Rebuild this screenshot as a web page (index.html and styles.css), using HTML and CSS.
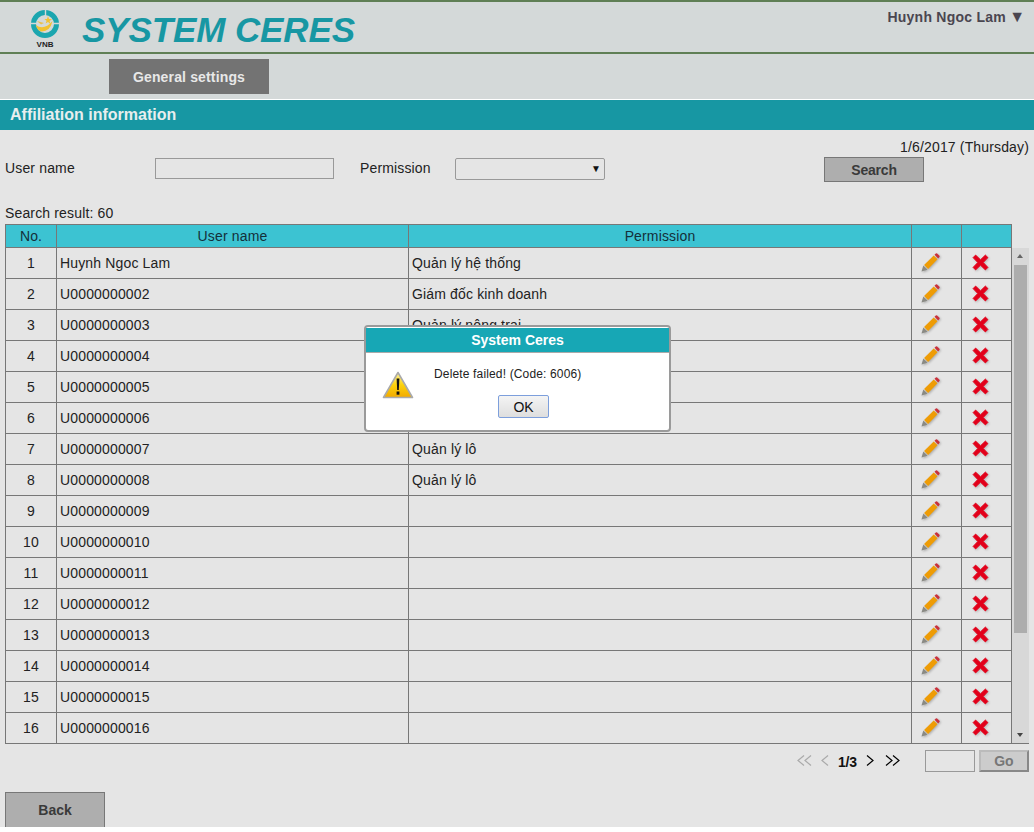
FILE: index.html
```html
<!DOCTYPE html>
<html lang="vi">
<head>
  <meta charset="UTF-8">
  <title>System Ceres</title>
  <link rel="stylesheet" href="styles.css">
</head>
<body>

  <svg class="defs" width="0" height="0">
    <symbol id="pencil" viewBox="0 0 20 20">
      <path d="M0.5 19.5 L2.5 13.2 L6.8 17.5 Z" fill="#8a8a84"/>
      <path d="M3.2 12.5 L13.4 2.6 L17.4 6.6 L7.5 16.8 Z" fill="#ee9c06"/>
      <path d="M14.2 1.8 L15.6 0.4 Q16.3 -0.1 17 0.5 L19.4 2.9 Q19.9 3.6 19.4 4.3 L18.1 5.8 Z" fill="#c9303a"/>
    </symbol>
    <symbol id="cross" viewBox="0 0 16 16">
      <path d="M1 3.4 L3.4 1 L8 5.4 L12.6 1 L15 3.4 L10.6 8 L15 12.6 L12.6 15 L8 10.6 L3.4 15 L1 12.6 L5.4 8 Z" fill="#e2001a" stroke="#e2001a" stroke-width="0.8" stroke-linejoin="round"/>
    </symbol>
  </svg>

  <div class="page">

    <header class="top-bar">
      <svg class="logo" width="32" height="32" viewBox="0 0 32 32">
        <circle cx="16" cy="16" r="11.5" fill="none" stroke="#1ba6af" stroke-width="5"/>
        <path d="M0 15.5 H8 M24 15.5 H32 M16.5 0 V8" stroke="#d4d9d9" stroke-width="1.4"/>
        <path d="M6.8 17 Q15 23 23.5 13 Q21 24 12 23.5 Q8 22 6.8 17 Z" fill="#f2c230"/>
        <path d="M8 13 L15 15 L12 16.5 Z" fill="#e8c050"/>
        <path d="M19 8 L20 11 L23 11.3 L20.6 13 L21.4 16 L19 14 L16.6 15.4 L17.6 12.8 L15.4 11 L18 11 Z" fill="#f2c230"/>
      </svg>
      <span class="logo-text">VNB</span>
      <h1 class="app-title">SYSTEM CERES</h1>
      <div class="user-menu">Huynh Ngoc Lam <span class="user-caret">▼</span></div>
    </header>

    <nav class="nav-bar">
      <a class="nav-item">General settings</a>
    </nav>

    <h2 class="section-title">Affiliation information</h2>

    <main class="content">
      <div class="date-line">1/6/2017 (Thursday)</div>

      <form class="search-form">
        <label class="label-user">User name</label>
        <input class="field-user" type="text">
        <label class="label-perm">Permission</label>
        <div class="field-perm">▼</div>
        <button class="btn btn-search" type="button">Search</button>
      </form>

      <div class="result-count">Search result: 60</div>

      <div class="grid-wrap">
        <table class="grid">
          <colgroup>
            <col class="c-no"><col class="c-user"><col class="c-perm"><col class="c-act"><col class="c-act">
          </colgroup>
          <thead>
            <tr><th>No.</th><th>User name</th><th>Permission</th><th></th><th></th></tr>
          </thead>
          <tbody>
            <tr><td class="num">1</td><td>Huynh Ngoc Lam</td><td>Quản lý hệ thống</td><td class="act"><svg class="i-pen"><use href="#pencil"/></svg></td><td class="act"><svg class="i-del"><use href="#cross"/></svg></td></tr>
            <tr><td class="num">2</td><td>U0000000002</td><td>Giám đốc kinh doanh</td><td class="act"><svg class="i-pen"><use href="#pencil"/></svg></td><td class="act"><svg class="i-del"><use href="#cross"/></svg></td></tr>
            <tr><td class="num">3</td><td>U0000000003</td><td>Quản lý nông trại</td><td class="act"><svg class="i-pen"><use href="#pencil"/></svg></td><td class="act"><svg class="i-del"><use href="#cross"/></svg></td></tr>
            <tr><td class="num">4</td><td>U0000000004</td><td></td><td class="act"><svg class="i-pen"><use href="#pencil"/></svg></td><td class="act"><svg class="i-del"><use href="#cross"/></svg></td></tr>
            <tr><td class="num">5</td><td>U0000000005</td><td></td><td class="act"><svg class="i-pen"><use href="#pencil"/></svg></td><td class="act"><svg class="i-del"><use href="#cross"/></svg></td></tr>
            <tr><td class="num">6</td><td>U0000000006</td><td></td><td class="act"><svg class="i-pen"><use href="#pencil"/></svg></td><td class="act"><svg class="i-del"><use href="#cross"/></svg></td></tr>
            <tr><td class="num">7</td><td>U0000000007</td><td>Quản lý lô</td><td class="act"><svg class="i-pen"><use href="#pencil"/></svg></td><td class="act"><svg class="i-del"><use href="#cross"/></svg></td></tr>
            <tr><td class="num">8</td><td>U0000000008</td><td>Quản lý lô</td><td class="act"><svg class="i-pen"><use href="#pencil"/></svg></td><td class="act"><svg class="i-del"><use href="#cross"/></svg></td></tr>
            <tr><td class="num">9</td><td>U0000000009</td><td></td><td class="act"><svg class="i-pen"><use href="#pencil"/></svg></td><td class="act"><svg class="i-del"><use href="#cross"/></svg></td></tr>
            <tr><td class="num">10</td><td>U0000000010</td><td></td><td class="act"><svg class="i-pen"><use href="#pencil"/></svg></td><td class="act"><svg class="i-del"><use href="#cross"/></svg></td></tr>
            <tr><td class="num">11</td><td>U0000000011</td><td></td><td class="act"><svg class="i-pen"><use href="#pencil"/></svg></td><td class="act"><svg class="i-del"><use href="#cross"/></svg></td></tr>
            <tr><td class="num">12</td><td>U0000000012</td><td></td><td class="act"><svg class="i-pen"><use href="#pencil"/></svg></td><td class="act"><svg class="i-del"><use href="#cross"/></svg></td></tr>
            <tr><td class="num">13</td><td>U0000000013</td><td></td><td class="act"><svg class="i-pen"><use href="#pencil"/></svg></td><td class="act"><svg class="i-del"><use href="#cross"/></svg></td></tr>
            <tr><td class="num">14</td><td>U0000000014</td><td></td><td class="act"><svg class="i-pen"><use href="#pencil"/></svg></td><td class="act"><svg class="i-del"><use href="#cross"/></svg></td></tr>
            <tr><td class="num">15</td><td>U0000000015</td><td></td><td class="act"><svg class="i-pen"><use href="#pencil"/></svg></td><td class="act"><svg class="i-del"><use href="#cross"/></svg></td></tr>
            <tr><td class="num">16</td><td>U0000000016</td><td></td><td class="act"><svg class="i-pen"><use href="#pencil"/></svg></td><td class="act"><svg class="i-del"><use href="#cross"/></svg></td></tr>
          </tbody>
        </table>
        <div class="scrollbar">
          <span class="arrow-up"></span>
          <span class="thumb"></span>
          <span class="arrow-down"></span>
        </div>
      </div>

      <div class="pager">
        <svg class="pg pg-double off" viewBox="0 0 15 11"><path d="M7 0.5 L1 5.5 L7 10.5 M14 0.5 L8 5.5 L14 10.5"/></svg>
        <svg class="pg pg-single off" viewBox="0 0 8 11"><path d="M7 0.5 L1 5.5 L7 10.5"/></svg>
        <span class="pg-num">1/3</span>
        <svg class="pg pg-single" viewBox="0 0 8 11"><path d="M1 0.5 L7 5.5 L1 10.5"/></svg>
        <svg class="pg pg-double" viewBox="0 0 15 11"><path d="M1 0.5 L7 5.5 L1 10.5 M8 0.5 L14 5.5 L8 10.5"/></svg>
        <input class="pg-input" type="text">
        <button class="pg-go" type="button">Go</button>
      </div>

      <button class="btn btn-back" type="button">Back</button>
    </main>

    <div class="dialog">
      <div class="dialog-title">System Ceres</div>
      <div class="dialog-body">
        <svg class="warn" width="32" height="28" viewBox="0 0 32 28">
          <defs>
            <linearGradient id="warnFill" x1="0" y1="0" x2="0" y2="1">
              <stop offset="0" stop-color="#fff3a0"/>
              <stop offset="0.5" stop-color="#fcd20c"/>
              <stop offset="1" stop-color="#f2a900"/>
            </linearGradient>
          </defs>
          <path d="M16 1.5 L30.5 26.5 H1.5 Z" fill="url(#warnFill)" stroke="#aaa" stroke-width="1.6" stroke-linejoin="round"/>
          <path d="M14.6 7.5 H17.4 L16.8 19 H15.2 Z" fill="#111"/>
          <rect x="14.6" y="20.5" width="2.8" height="3.2" fill="#111"/>
        </svg>
        <div class="dialog-main">
          <p class="dialog-msg">Delete failed! (Code: 6006)</p>
          <button class="dialog-ok" type="button">OK</button>
        </div>
      </div>
    </div>

  </div>

</body>
</html>
```

FILE: styles.css
```css
body {
  margin: 0;
  background: #fff;
  font-family: "Liberation Sans", Arial, sans-serif;
  font-size: 14px;
  letter-spacing: 0.15px;
  color: #222;
}

.defs {
  position: absolute;
}

.page {
  position: relative;
  height: 827px;
  overflow: hidden;
  background: #e5e5e5;
}

/* header */
.top-bar {
  position: relative;
  display: flex;
  align-items: flex-start;
  height: 50px;
  background: #d4d9d9;
  border-top: 2px solid #5f7f55;
  border-bottom: 2px solid #5f7f55;
}

.logo {
  margin: 6px 0 0 29px;
}

.logo-text {
  position: absolute;
  left: 29px;
  top: 38px;
  width: 32px;
  text-align: center;
  font-size: 8px;
  font-weight: bold;
  letter-spacing: 0;
  color: #222;
}

.app-title {
  margin: 7px 0 0 21px;
  font-size: 35px;
  line-height: 42px;
  font-weight: bold;
  font-style: italic;
  letter-spacing: -0.1px;
  color: #1797a3;
}

.user-menu {
  margin: 7px 10px 0 auto;
  height: 16px;
  line-height: 16px;
  font-weight: bold;
  letter-spacing: 0.25px;
  color: #4a4650;
}

.user-caret {
  margin-left: -1px;
  font-size: 16px;
  line-height: 14px;
  letter-spacing: -1px;
}

.nav-bar {
  display: flex;
  box-sizing: border-box;
  height: 46px;
  padding: 5px 0 0 109px;
  background: #d4d9d9;
  border-bottom: 1px solid #fff;
}

.nav-item {
  width: 160px;
  height: 35px;
  line-height: 36px;
  text-align: center;
  font-weight: bold;
  color: #e8e8e8;
  background: #737373;
}

.section-title {
  margin: 0;
  height: 30px;
  padding-left: 10px;
  line-height: 29px;
  font-size: 16px;
  letter-spacing: 0;
  color: #e8eeee;
  background: #1797a3;
}

/* form */
.content {
  padding: 0 5px;
}

.date-line {
  padding-top: 9px;
  height: 16px;
  line-height: 16px;
  text-align: right;
}

.search-form {
  display: flex;
  align-items: flex-start;
  height: 47px;
  margin-top: 3px;
}

.label-user {
  width: 150px;
  padding-top: 2px;
}

.field-user {
  width: 179px;
  height: 21px;
  padding: 0;
  box-sizing: border-box;
  background: transparent;
  border: 1px solid #999;
}

.label-perm {
  margin-left: 26px;
  width: 95px;
  padding-top: 2px;
}

.field-perm {
  width: 150px;
  height: 22px;
  box-sizing: border-box;
  border: 1px solid #999;
  border-radius: 2px;
  text-align: right;
  padding-right: 3px;
  font-size: 10px;
  line-height: 20px;
  color: #111;
}

.btn {
  width: 100px;
  background: #aeaeae;
  border: 1px solid #777;
  font-family: inherit;
  font-size: 14px;
  font-weight: bold;
  letter-spacing: 0;
  color: #3a3a3a;
  padding: 0;
}

.btn-search {
  height: 25px;
  margin: -1px 0 0 219px;
  letter-spacing: -0.2px;
}

.result-count {
  height: 16px;
  line-height: 16px;
}

/* table */
.grid-wrap {
  display: flex;
  align-items: flex-start;
  margin-top: 3px;
}

.grid {
  width: 1007px;
  table-layout: fixed;
  border-collapse: separate;
  border-spacing: 0;
  border-top: 1px solid #777;
  border-left: 1px solid #777;
}

.c-no { width: 51px; }
.c-user { width: 352px; }
.c-perm { width: 503px; }
.c-act { width: 50px; }

.grid th, .grid td {
  padding: 0;
  border-right: 1px solid #777;
  border-bottom: 1px solid #777;
  font-weight: normal;
}

.grid th {
  height: 22px;
  text-align: center;
  background: #3cc3d2;
  color: #14303a;
}

.grid td {
  height: 30px;
  padding-left: 3px;
}

.grid td.num {
  padding-left: 0;
  text-align: center;
}

.grid td.act {
  padding-left: 0;
}

.i-pen {
  display: block;
  width: 19px;
  height: 19px;
  margin: 0 0 1px 9px;
  filter: drop-shadow(1px 1px 1px rgba(0, 0, 0, 0.25));
}

.i-del {
  display: block;
  width: 17px;
  height: 17px;
  margin: 0 0 1px 10px;
  filter: drop-shadow(1px 1px 1px rgba(0, 0, 0, 0.2));
}

.scrollbar {
  position: relative;
  flex: none;
  width: 17px;
  height: 495px;
  margin-top: 24px;
  background: #d8d8d8;
  border-bottom: 1px solid #777;
}

.thumb {
  position: absolute;
  left: 2px;
  top: 17px;
  width: 13px;
  height: 368px;
  background: #adadad;
}

.arrow-up, .arrow-down {
  position: absolute;
  left: 5px;
  width: 0;
  height: 0;
  border-left: 3.5px solid transparent;
  border-right: 3.5px solid transparent;
}

.arrow-up {
  top: 6px;
  border-bottom: 4px solid #666;
}

.arrow-down {
  bottom: 6px;
  border-top: 4px solid #444;
}

/* pager */
.pager {
  display: flex;
  align-items: center;
  height: 23px;
  margin-top: 5px;
}

.pg {
  fill: none;
  stroke: #000;
  stroke-width: 1.2;
  height: 11px;
  margin-top: -1px;
}

.pg.off {
  stroke: #aaa;
}

.pg-double {
  width: 15px;
}

.pg-single {
  width: 8px;
}

.pager .pg-double:first-child {
  margin-left: 792px;
}

.pg-double.off + .pg-single {
  margin-left: 9px;
}

.pg-num {
  margin: 3px 9px 0 9px;
  font-weight: bold;
  letter-spacing: -0.2px;
  color: #111;
}

.pg-single + .pg-double {
  margin-left: 11px;
}

.pg-input {
  width: 50px;
  height: 22px;
  margin-left: 25px;
  padding: 0;
  box-sizing: border-box;
  background: transparent;
  border: 1px solid #999;
}

.pg-go {
  width: 50px;
  height: 22px;
  margin-left: 4px;
  padding: 0;
  font-family: inherit;
  font-size: 14px;
  font-weight: bold;
  letter-spacing: 0;
  color: #777;
  background: #ccc;
  border: 2px solid;
  border-color: #bbb #888 #888 #bbb;
}

.btn-back {
  display: block;
  height: 36px;
  margin-top: 20px;
}

/* dialog */
.dialog {
  position: absolute;
  left: 364px;
  top: 325px;
  width: 307px;
  height: 107px;
  box-sizing: border-box;
  background: #fff;
  border: 2px solid #9a9a9a;
  border-radius: 4px;
}

.dialog-title {
  height: 24px;
  margin-top: 1px;
  line-height: 24px;
  text-align: center;
  font-weight: bold;
  letter-spacing: 0;
  color: #fff;
  background: #17a7b5;
  border-bottom: 1px solid #aaa;
}

.dialog-body {
  display: flex;
  padding: 18px 0 0 16px;
}

.warn {
  flex: none;
}

.dialog-main {
  margin-top: -4px;
  padding-left: 20px;
  width: 234px;
}

.dialog-msg {
  margin: 0;
  font-size: 12px;
  line-height: 14px;
}

.dialog-ok {
  display: block;
  width: 51px;
  height: 23px;
  margin: 14px 0 0 64px;
  padding: 0;
  font-family: inherit;
  font-size: 14px;
  color: #111;
  background: linear-gradient(#f4f4f4, #dedede);
  border: 1px solid #7d9fdc;
  border-radius: 2px;
}
```
